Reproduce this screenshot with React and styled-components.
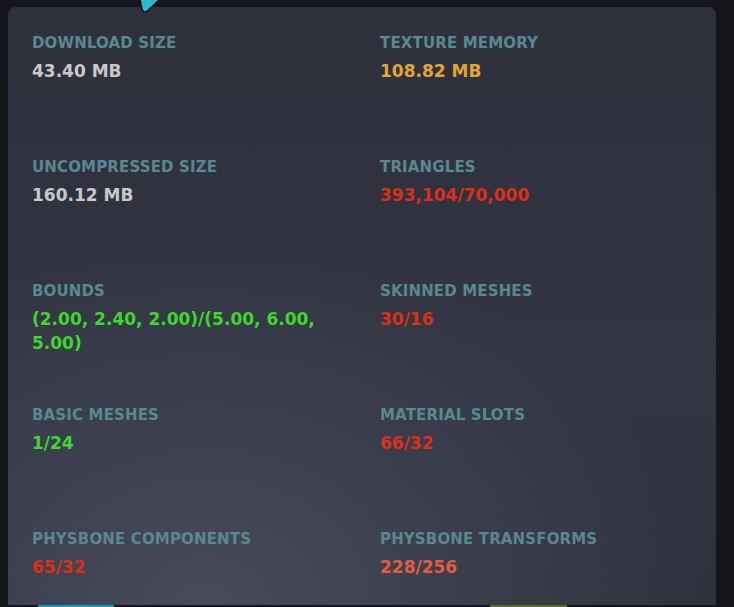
import React from 'react';
import styled, { createGlobalStyle } from 'styled-components';

const GlobalStyle = createGlobalStyle`
	html, body {
		margin: 0;
		padding: 0;
		background: #14161c;
		font-family: 'DejaVu Sans', Verdana, sans-serif;
		overflow: hidden;
	}
`;

const stats = [
	{ label: 'Download Size', value: '43.40 MB', tone: 'plain' },
	{ label: 'Texture Memory', value: '108.82 MB', tone: 'warn' },
	{ label: 'Uncompressed Size', value: '160.12 MB', tone: 'plain' },
	{ label: 'Triangles', value: '393,104/70,000', tone: 'bad' },
	{ label: 'Bounds', value: '(2.00, 2.40, 2.00)/(5.00, 6.00, 5.00)', tone: 'good' },
	{ label: 'Skinned Meshes', value: '30/16', tone: 'bad' },
	{ label: 'Basic Meshes', value: '1/24', tone: 'good' },
	{ label: 'Material Slots', value: '66/32', tone: 'bad' },
	{ label: 'PhysBone Components', value: '65/32', tone: 'bad' },
	{ label: 'PhysBone Transforms', value: '228/256', tone: 'soft' },
];

const toneColors = {
	plain: '#c9c9cc',
	warn: '#e2a72e',
	bad: '#dc2f17',
	good: '#3ed82a',
	soft: '#e55a43',
};

const App = () => {
	return (
		<Page>
			<GlobalStyle />
			{/* cursor tip hanging over the panel edge */}
			<Pointer width="22" height="15" viewBox="0 0 22 15">
				<path d="M1 -1 L3 9 Q4 13.5 8.5 11 L21 -1 Z" fill="#2cb8d3" stroke="#0d1014" strokeWidth="1.5" strokeLinejoin="round" />
			</Pointer>
			<Panel>
				<StatGrid>
					{stats.map((s) => (
						<Stat key={s.label}>
							<Label>{s.label}</Label>
							<Value $tone={s.tone}>{s.value}</Value>
						</Stat>
					))}
				</StatGrid>
			</Panel>
			<TabStrip>
				<TabMark $color="#1a9aa6" $width="76px" />
				<TabMark $color="#5e6a2a" $width="77px" $offset="376px" />
			</TabStrip>
		</Page>
	);
};

export default App;

const Page = styled.div`
	position: relative;
	width: 734px;
	height: 607px;
	padding: 7px 18px 0 8px;
	box-sizing: border-box;
	overflow: hidden;
	display: flex;
	flex-direction: column;
`;

const Pointer = styled.svg`
	position: absolute;
	left: 139px;
	top: 0;
	z-index: 2;
`;

const Panel = styled.div`
	height: 598px;
	flex-shrink: 0;
	border-radius: 8px 8px 0 0;
	background:
		radial-gradient(ellipse 70% 60% at 28% 100%, rgba(72, 76, 92, 0.95), rgba(72, 76, 92, 0) 100%),
		linear-gradient(180deg, #2e313c 0%, #323542 60%, #2f323e 100%);
	padding: 24px 24px 0 24px;
	box-sizing: border-box;
`;

const StatGrid = styled.div`
	display: grid;
	grid-template-columns: 348px 1fr;
	grid-auto-rows: 124px;
`;

const Stat = styled.div`
	display: flex;
	flex-direction: column;
	gap: 4px;
	padding-right: 24px;
`;

const Label = styled.div`
	font-size: 15px;
	line-height: 24px;
	font-weight: 700;
	text-transform: uppercase;
	letter-spacing: 0.15px;
	color: #588892;
`;

const Value = styled.div`
	font-size: 17px;
	line-height: 24px;
	font-weight: 700;
	color: ${(p) => toneColors[p.$tone]};
`;

const TabStrip = styled.div`
	display: flex;
	height: 2px;
	padding-left: 30px;
`;

const TabMark = styled.div`
	width: ${(p) => p.$width};
	margin-left: ${(p) => p.$offset || '0'};
	background: ${(p) => p.$color};
`;
